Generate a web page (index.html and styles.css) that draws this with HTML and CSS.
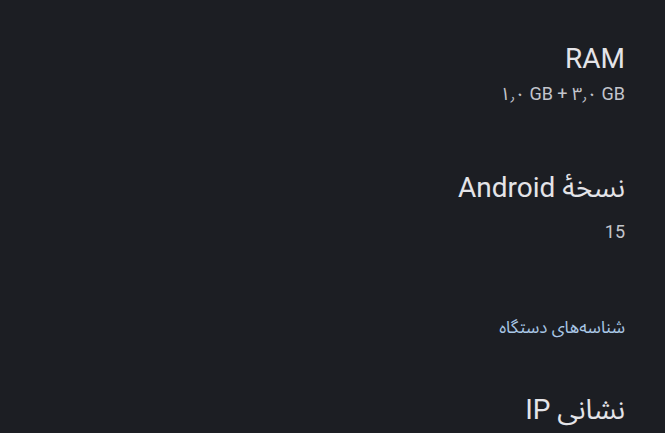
FILE: index.html
```html
<!DOCTYPE html>
<html lang="fa" dir="rtl">
<head>
<meta charset="utf-8">
<title>درباره تلفن</title>
<link rel="stylesheet" href="styles.css">
</head>
<body>
<main class="list">
  <div class="item item-ram">
    <div class="title">RAM</div>
    <div class="summary ltr">١٫٠ GB + ٣٫٠ GB</div>
  </div>
  <div class="item item-android">
    <div class="title">نسخهٔ Android</div>
    <div class="summary">15</div>
  </div>
  <div class="category">شناسه‌های دستگاه</div>
  <div class="item item-ip">
    <div class="title">نشانی IP</div>
  </div>
</main>
</body>
</html>
```
FILE: styles.css
```css
html, body {
  margin: 0;
  padding: 0;
  background: #1c1e23;
}
body {
  width: 665px;
  height: 433px;
  overflow: hidden;
  font-family: Roboto, "Noto Sans Arabic", "DejaVu Sans", sans-serif;
}
.list {
  display: flex;
  flex-direction: column;
  padding: 41px 40px 0 40px;
}
.item {
  display: flex;
  flex-direction: column;
  align-items: flex-start;
}
.title {
  font-size: 28px;
  line-height: 36px;
  color: #e4e4e8;
}
.summary {
  font-size: 18px;
  line-height: 24px;
  color: #c3c5cc;
  margin-top: 5px;
}
.ltr {
  direction: ltr;
}
.item-android {
  margin-top: 64px;
}
.item-android .summary {
  margin-top: 14px;
}
.category {
  margin-top: 71px;
  font-size: 17px;
  line-height: 24px;
  color: #a9c7e6;
}
.item-ip {
  margin-top: 53px;
}
```
